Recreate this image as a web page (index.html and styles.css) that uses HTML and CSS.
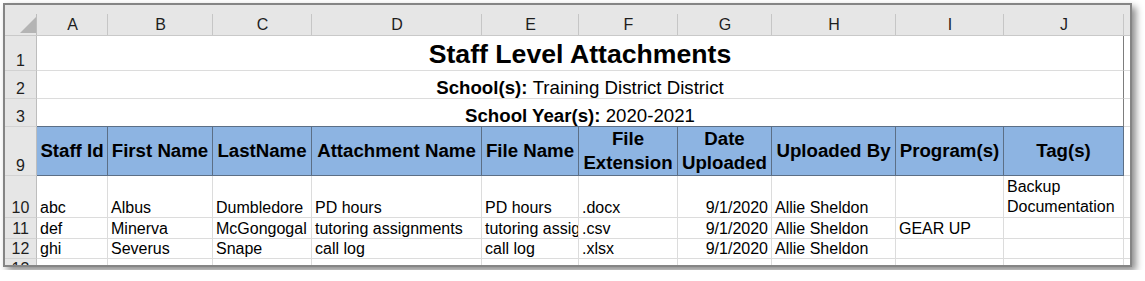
FILE: index.html
```html
<!DOCTYPE html>
<html>
<head>
<meta charset="utf-8">
<link rel="stylesheet" href="styles.css">
</head>
<body>
<div class="sheet">
  <div class="grid">
    <div class="ch corner"><svg class="tri" width="16" height="16" viewBox="0 0 16 16"><polygon points="16,0 16,16 0,16" fill="#b4b4b4"/></svg></div>
    <div class="ch">A</div>
    <div class="ch">B</div>
    <div class="ch">C</div>
    <div class="ch">D</div>
    <div class="ch">E</div>
    <div class="ch">F</div>
    <div class="ch">G</div>
    <div class="ch">H</div>
    <div class="ch">I</div>
    <div class="ch">J</div>
    <div class="ch last"></div>

    <div class="rh">1</div>
    <div class="merged title">Staff Level Attachments</div>
    <div class="c"></div>

    <div class="rh">2</div>
    <div class="merged sub"><b>School(s):</b>&nbsp;Training District District</div>
    <div class="c"></div>

    <div class="rh">3</div>
    <div class="merged sub year"><b>School Year(s):</b>&nbsp;2020-2021</div>
    <div class="c"></div>

    <div class="rh">9</div>
    <div class="hd">Staff Id</div>
    <div class="hd">First Name</div>
    <div class="hd">LastName</div>
    <div class="hd">Attachment Name</div>
    <div class="hd">File Name</div>
    <div class="hd">File Extension</div>
    <div class="hd">Date Uploaded</div>
    <div class="hd">Uploaded By</div>
    <div class="hd">Program(s)</div>
    <div class="hd">Tag(s)</div>
    <div class="c"></div>

    <div class="rh">10</div>
    <div class="c">abc</div>
    <div class="c">Albus</div>
    <div class="c">Dumbledore</div>
    <div class="c">PD hours</div>
    <div class="c">PD hours</div>
    <div class="c">.docx</div>
    <div class="c num">9/1/2020</div>
    <div class="c">Allie Sheldon</div>
    <div class="c"></div>
    <div class="c wrap">Backup Documentation</div>
    <div class="c"></div>

    <div class="rh">11</div>
    <div class="c">def</div>
    <div class="c">Minerva</div>
    <div class="c">McGongogal</div>
    <div class="c">tutoring assignments</div>
    <div class="c">tutoring assignments</div>
    <div class="c">.csv</div>
    <div class="c num">9/1/2020</div>
    <div class="c">Allie Sheldon</div>
    <div class="c">GEAR UP</div>
    <div class="c"></div>
    <div class="c"></div>

    <div class="rh">12</div>
    <div class="c">ghi</div>
    <div class="c">Severus</div>
    <div class="c">Snape</div>
    <div class="c">call log</div>
    <div class="c">call log</div>
    <div class="c">.xlsx</div>
    <div class="c num">9/1/2020</div>
    <div class="c">Allie Sheldon</div>
    <div class="c"></div>
    <div class="c"></div>
    <div class="c"></div>

    <div class="rh">13</div>
    <div class="c"></div>
    <div class="c"></div>
    <div class="c"></div>
    <div class="c"></div>
    <div class="c"></div>
    <div class="c"></div>
    <div class="c"></div>
    <div class="c"></div>
    <div class="c"></div>
    <div class="c"></div>
    <div class="c"></div>
  </div>
</div>
</body>
</html>
```

FILE: styles.css
```css
* { box-sizing: border-box; }

html, body {
  margin: 0;
  padding: 0;
  background: #ffffff;
}

body {
  font-family: "Liberation Sans", Arial, sans-serif;
  color: #000;
}

.sheet {
  margin: 3px;
  width: 1129px;
  height: 264px;
  border: 2px solid #858585;
  overflow: hidden;
  box-shadow: 4px 4px 7px rgba(0, 0, 0, 0.45);
  background: #fff;
}

.grid {
  display: grid;
  grid-template-columns: 32px 71px 105px 99px 170px 97px 99px 94px 124px 108px 120px 1fr;
  grid-template-rows: 31px 35px 28px 28px 49px 42px 21px 20px 20px;
}

.grid > div {
  display: flex;
  align-items: flex-end;
  overflow: hidden;
  white-space: nowrap;
  min-width: 0;
}

/* column letter headers */
.ch {
  position: relative;
  background: #e6e6e6;
  border-bottom: 1px solid #c9c9c9;
  justify-content: center;
  font-size: 16px;
  line-height: 20px;
  color: #1e1e1e;
}
.ch::after {
  content: "";
  position: absolute;
  right: 0;
  top: 9px;
  bottom: 0;
  width: 1px;
  background: #c6c6c6;
}
.ch.last::after { display: none; }

.corner {
  justify-content: flex-end;
  padding: 0 1px 2px 0;
}
.corner::after { background: #bdbdbd; }
.tri { display: block; }

/* row number headers */
.rh {
  background: #e6e6e6;
  border-right: 1px solid #bdbdbd;
  border-bottom: 1px solid #d2d2d2;
  justify-content: center;
  font-size: 16px;
  line-height: 18px;
  color: #1e1e1e;
}

/* plain cells */
.c {
  border-right: 1px solid #dcdcdc;
  border-bottom: 1px solid #dcdcdc;
  font-size: 16px;
  line-height: 18px;
  padding: 0 3px;
}
.c.num { justify-content: flex-end; }
.c.wrap {
  white-space: normal;
  line-height: 20px;
}

/* merged report header rows */
.merged {
  grid-column: 2 / 12;
  justify-content: center;
  border-right: 1px solid #7d7d7d;
  border-bottom: 1px solid #dcdcdc;
}
.title {
  font-size: 26.67px;
  font-weight: bold;
  line-height: 30px;
  padding-bottom: 1px;
}
.sub {
  font-size: 18.67px;
  line-height: 21px;
}
.sub b { font-weight: bold; }
.year { border-bottom-color: #5c6f86; }

/* blue column headings */
.hd {
  background: #8db4e2;
  border-right: 1px solid #5c6f86;
  border-bottom: 1px solid #5c6f86;
  justify-content: center;
  align-items: center !important;
  text-align: center;
  white-space: normal !important;
  font-size: 18.67px;
  font-weight: bold;
  line-height: 24px;
  padding: 0 2px;
}
```
